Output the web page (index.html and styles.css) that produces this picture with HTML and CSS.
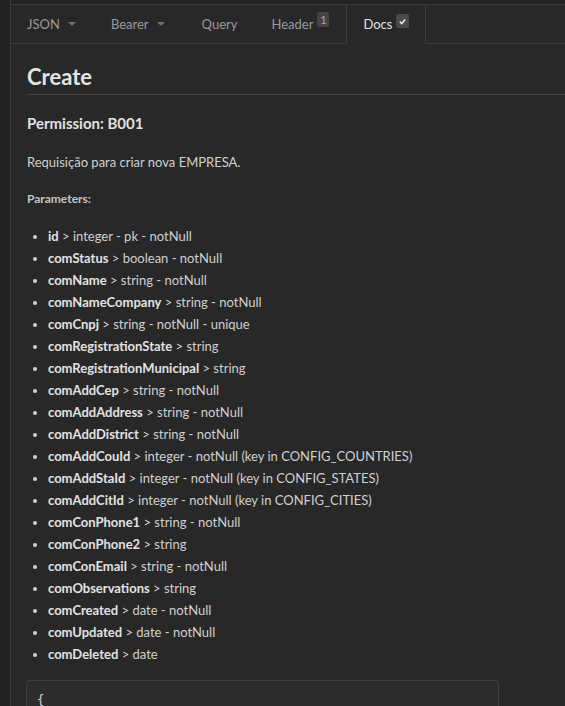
FILE: index.html
```html
<!DOCTYPE html>
<html lang="pt">
<head>
<meta charset="utf-8">
<title>Docs - Create</title>
<link rel="stylesheet" href="styles.css">
</head>
<body>
<div class="app">
  <div class="sidebar"></div>
  <div class="main">
    <div class="panel">
      <nav class="tabs">
        <div class="tab tab-first">JSON <span class="caret"></span></div>
        <div class="tab tab-bearer">Bearer <span class="caret"></span></div>
        <div class="tab">Query</div>
        <div class="tab">Header <span class="badge">1</span></div>
        <div class="tab active">Docs <span class="badge badge-check"><svg viewBox="0 0 10 10" width="9" height="9"><path d="M2 5.2 L4.2 7.2 L8 2.8" fill="none" stroke="#e6e6e6" stroke-width="1.8"/></svg></span></div>
        <div class="tab-fill"></div>
      </nav>
      <div class="content">
        <h1 class="title">Create</h1>
        <h3 class="permission">Permission: B001</h3>
        <p class="desc">Requisição para criar nova EMPRESA.</p>
        <h5 class="params-title">Parameters:</h5>
        <ul class="params">
          <li><b>id</b> &gt; integer - pk - notNull</li>
          <li><b>comStatus</b> &gt; boolean - notNull</li>
          <li><b>comName</b> &gt; string - notNull</li>
          <li><b>comNameCompany</b> &gt; string - notNull</li>
          <li><b>comCnpj</b> &gt; string - notNull - unique</li>
          <li><b>comRegistrationState</b> &gt; string</li>
          <li><b>comRegistrationMunicipal</b> &gt; string</li>
          <li><b>comAddCep</b> &gt; string - notNull</li>
          <li><b>comAddAddress</b> &gt; string - notNull</li>
          <li><b>comAddDistrict</b> &gt; string - notNull</li>
          <li><b>comAddCouId</b> &gt; integer - notNull (key in CONFIG_COUNTRIES)</li>
          <li><b>comAddStaId</b> &gt; integer - notNull (key in CONFIG_STATES)</li>
          <li><b>comAddCitId</b> &gt; integer - notNull (key in CONFIG_CITIES)</li>
          <li><b>comConPhone1</b> &gt; string - notNull</li>
          <li><b>comConPhone2</b> &gt; string</li>
          <li><b>comConEmail</b> &gt; string - notNull</li>
          <li><b>comObservations</b> &gt; string</li>
          <li><b>comCreated</b> &gt; date - notNull</li>
          <li><b>comUpdated</b> &gt; date - notNull</li>
          <li><b>comDeleted</b> &gt; date</li>
        </ul>
        <pre class="code">{</pre>
      </div>
    </div>
  </div>
</div>
</body>
</html>
```
FILE: styles.css
```css
html, body {
  margin: 0;
  padding: 0;
  height: 100%;
  overflow: hidden;
  background: #222222;
  font-family: "Lato", "Noto Sans", sans-serif;
}

.app {
  display: flex;
  height: 100%;
}

.sidebar {
  width: 10px;
  flex: none;
  background: #222222;
}

.main {
  flex: 1;
  border-left: 1px solid #3a3a3a;
  padding-top: 4px;
  background: #222222;
  min-width: 0;
}

.panel {
  border-top: 1px solid #3a3a3a;
  background: #282828;
  height: 100%;
  overflow: hidden;
}

.tabs {
  display: flex;
  height: 39px;
}

.tab {
  display: flex;
  align-items: center;
  padding: 0 17px;
  font-size: 13px;
  color: #9a9a9a;
  border-bottom: 1px solid #3e3e3e;
  white-space: nowrap;
}

.tab-first {
  padding-left: 16px;
  padding-right: 18px;
}

.tab-bearer {
  padding-right: 20px;
}

.tab.active {
  color: #e2e2e2;
  border-bottom-color: transparent;
  border-left: 1px solid #3e3e3e;
  border-right: 1px solid #3e3e3e;
  padding: 0 16px;
}

.tab-fill {
  flex: 1;
  border-bottom: 1px solid #3e3e3e;
}

.caret {
  display: inline-block;
  width: 0;
  height: 0;
  margin-left: 8px;
  border-left: 4px solid transparent;
  border-right: 4px solid transparent;
  border-top: 4px solid #6e6e6e;
}

.badge {
  display: inline-flex;
  align-items: center;
  justify-content: center;
  align-self: flex-start;
  margin-top: 7px;
  margin-left: 4px;
  min-width: 12px;
  height: 15px;
  border-radius: 2px;
  background: #444444;
  color: #a8a8a8;
  font-size: 11px;
}

.badge-check {
  width: 13px;
  height: 14px;
  margin-top: 9px;
  background: #4a4a4a;
}

.content {
  padding: 0 0 0 16px;
}

.title {
  margin: 0;
  padding: 22px 0 6px;
  font-size: 22px;
  font-weight: 700;
  line-height: 22px;
  color: #e4e4e4;
  border-bottom: 1px solid #444444;
}

.permission {
  margin: 18px 0 0;
  font-size: 15px;
  font-weight: 700;
  line-height: 20px;
  color: #e2e2e2;
}

.desc {
  margin: 19px 0 0;
  font-size: 13px;
  line-height: 20px;
  color: #d0d0d0;
}

.params-title {
  margin: 18px 0 0;
  font-size: 12px;
  font-weight: 700;
  line-height: 18px;
  color: #c4c4c4;
}

.params {
  margin: 17px 0 0;
  padding-left: 21px;
  font-size: 13px;
  line-height: 22px;
  color: #d0d0d0;
}

.params b {
  color: #e2e2e2;
}

.code {
  margin: 15px 0 0;
  width: 451px;
  min-height: 60px;
  padding: 10px 10px;
  background: #2c2c2c;
  border: 1px solid #3f3f3f;
  border-radius: 3px;
  font-family: "DejaVu Sans Mono", monospace;
  font-size: 12px;
  line-height: 18px;
  color: #d4d4d4;
  transform: translateX(-1px);
}
```
